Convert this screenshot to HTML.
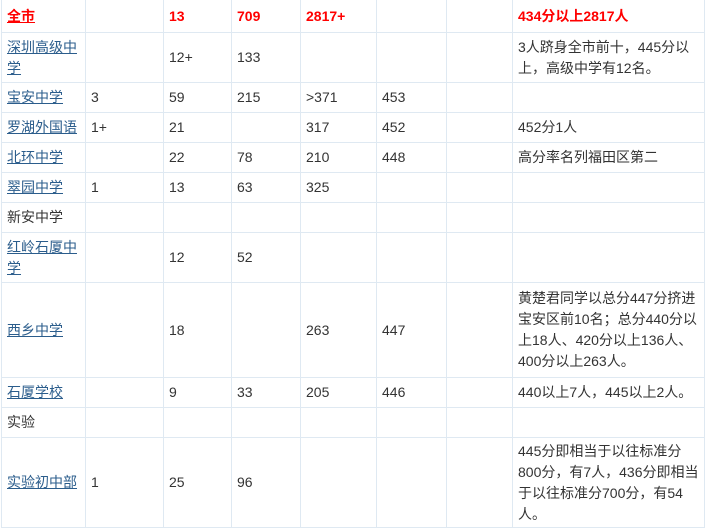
<!DOCTYPE html>
<html><head><meta charset="utf-8"><style>
body{margin:0;background:#fff;width:705px;height:531px;overflow:hidden;position:relative;font-family:"Liberation Sans","Noto Sans CJK SC",sans-serif;font-size:14px;color:#333}
table{position:absolute;left:1px;top:-1px;border-collapse:collapse;table-layout:fixed}
td{border:1px solid #dfe9f2;padding:0 4px 0 5px;line-height:21px;vertical-align:middle;overflow:hidden}
a{color:#2b5d8c;text-decoration:underline}
.r{color:#f00;font-weight:bold}
</style></head><body>
<table>
<colgroup><col style="width:84px"><col style="width:78px"><col style="width:68px"><col style="width:69px"><col style="width:76px"><col style="width:70px"><col style="width:66px"><col style="width:192px"></colgroup>
<tr style="height:33px"><td><a class="r" style="color:#f00">全市</a></td><td></td><td class="r">13</td><td class="r">709</td><td class="r">2817+</td><td></td><td></td><td class="r">434分以上2817人</td></tr>
<tr style="height:50px"><td><a>深圳高级中学</a></td><td></td><td>12+</td><td>133</td><td></td><td></td><td></td><td>3人跻身全市前十，445分以上，高级中学有12名。</td></tr>
<tr style="height:30px"><td><a>宝安中学</a></td><td>3</td><td>59</td><td>215</td><td>&gt;371</td><td>453</td><td></td><td></td></tr>
<tr style="height:30px"><td><a>罗湖外国语</a></td><td>1+</td><td>21</td><td></td><td>317</td><td>452</td><td></td><td>452分1人</td></tr>
<tr style="height:30px"><td><a>北环中学</a></td><td></td><td>22</td><td>78</td><td>210</td><td>448</td><td></td><td>高分率名列福田区第二</td></tr>
<tr style="height:30px"><td><a>翠园中学</a></td><td>1</td><td>13</td><td>63</td><td>325</td><td></td><td></td><td></td></tr>
<tr style="height:30px"><td>新安中学</td><td></td><td></td><td></td><td></td><td></td><td></td><td></td></tr>
<tr style="height:50px"><td><a>红岭石厦中学</a></td><td></td><td>12</td><td>52</td><td></td><td></td><td></td><td></td></tr>
<tr style="height:95px"><td><a>西乡中学</a></td><td></td><td>18</td><td></td><td>263</td><td>447</td><td></td><td>黄楚君同学以总分447分挤进宝安区前10名；总分440分以上18人、420分以上136人、400分以上263人。</td></tr>
<tr style="height:30px"><td><a>石厦学校</a></td><td></td><td>9</td><td>33</td><td>205</td><td>446</td><td></td><td>440以上7人，445以上2人。</td></tr>
<tr style="height:30px"><td>实验</td><td></td><td></td><td></td><td></td><td></td><td></td><td></td></tr>
<tr style="height:90px"><td><a>实验初中部</a></td><td>1</td><td>25</td><td>96</td><td></td><td></td><td></td><td>445分即相当于以往标准分800分，有7人，436分即相当于以往标准分700分，有54人。</td></tr>
</table>
</body></html>
